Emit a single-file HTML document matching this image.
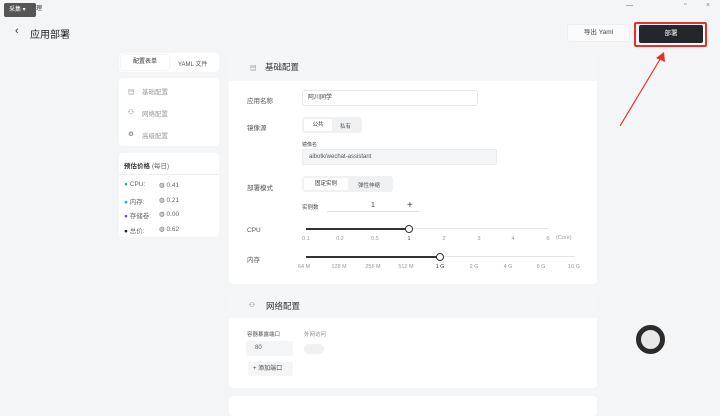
<!DOCTYPE html>
<html><head><meta charset="utf-8"><style>
*{box-sizing:border-box;margin:0;padding:0}
body{width:720px;height:409px;overflow:hidden;background:#f4f5f7;font-family:"Liberation Sans","Noto Sans CJK SC",sans-serif;color:#333;position:relative;font-size:7px}
.a{position:absolute}
.card{background:#fff;border-radius:4px}
.t{color:#666;font-size:6.5px}
.lbl{color:#555;font-size:6.5px}
.inp{background:#fff;border:1px solid #e6e6e6;border-radius:3px}
.tick{position:absolute;font-size:5.5px;color:#999;transform:translateX(-50%)}
</style></head><body>
<div class="a" style="left:4px;top:3px;width:32px;height:14px;background:#555;border-radius:2px;color:#fff;font-size:6px;line-height:14px;padding-left:5px">采集 ▾</div>
<div class="a" style="left:36px;top:3px;font-size:6px;color:#333">理</div>
<div class="a" style="left:626px;top:2px;font-size:7px;color:#666">—</div>
<div class="a" style="left:684px;top:1px;font-size:7px;color:#666">▫</div>
<div class="a" style="left:706px;top:2px;font-size:7px;color:#888">×</div>
<div class="a" style="left:15px;top:25px;font-size:11px;color:#333">‹</div>
<div class="a" style="left:30px;top:26px;font-size:10px;color:#222">应用部署</div>
<div class="a" style="left:567px;top:24px;width:63px;height:18px;background:#fafafa;border:1px solid #eee;border-radius:3px;font-size:6.5px;line-height:16px;text-align:center;color:#444">导出 Yaml</div>
<div class="a" style="left:634px;top:22px;width:73px;height:25px;border:2px solid #e8302a;border-radius:2px"></div>
<div class="a" style="left:639px;top:25px;width:64px;height:18px;background:#23262b;border-radius:2px;color:#fff;font-size:6.5px;line-height:18px;text-align:center">部署</div>
<svg class="a" style="left:610px;top:44px" width="60" height="90"><line x1="10" y1="82" x2="52" y2="12" stroke="#e8302a" stroke-width="1.2"/><polygon points="54,8 46,14 55,18" fill="#e8302a"/></svg>

<div class="a card" style="left:119px;top:53px;width:100px;height:19px"></div>
<div class="a" style="left:121px;top:55px;width:48px;height:15px;background:#fff;box-shadow:0 0 2px #ddd;border-radius:3px;font-size:6px;line-height:15px;text-align:center">配置表单</div>
<div class="a" style="left:178px;top:59px;font-size:6px;color:#555">YAML 文件</div>
<div class="a card" style="left:119px;top:78px;width:100px;height:68px"></div>
<div class="a t" style="left:128px;top:86px">▤</div><div class="a t" style="left:142px;top:86px;color:#999">基础配置</div>
<div class="a t" style="left:128px;top:108px">⚇</div><div class="a t" style="left:142px;top:108px;color:#999">网络配置</div>
<div class="a t" style="left:128px;top:130px">⚙</div><div class="a t" style="left:142px;top:130px;color:#999">高级配置</div>
<div class="a card" style="left:119px;top:153px;width:100px;height:84px"></div>
<div class="a" style="left:124px;top:160px;font-size:6.5px;color:#333"><b>预估价格</b> <span style="color:#666">(每日)</span></div>
<div class="a" style="left:119px;top:174px;width:100px;height:1px;background:#eee"></div>
<div class="a t" style="left:124px;top:181px"><span style="color:#2bb38d">●</span> CPU:</div><div class="a t" style="left:159px;top:181px">◍ 0.41</div>
<div class="a t" style="left:124px;top:196px"><span style="color:#2a9fe0">●</span> 内存:</div><div class="a t" style="left:159px;top:196px">◍ 0.21</div>
<div class="a t" style="left:124px;top:210px"><span style="color:#6c4fc9">●</span> 存储卷:</div><div class="a t" style="left:159px;top:210px">◍ 0.00</div>
<div class="a t" style="left:124px;top:225px"><span style="color:#222">●</span> 总价:</div><div class="a t" style="left:159px;top:225px">◍ 0.62</div>

<div class="a card" style="left:229px;top:54px;width:368px;height:230px"></div>
<div class="a" style="left:229px;top:54px;width:368px;height:27px;background:#f5f6f8;border-radius:4px 4px 0 0"></div>
<div class="a t" style="left:250px;top:62px">▤</div>
<div class="a" style="left:265px;top:61px;font-size:8.5px;color:#333">基础配置</div>
<div class="a lbl" style="left:247px;top:95px">应用名称</div>
<div class="a inp" style="left:302px;top:90px;width:176px;height:16px;padding-left:5px;font-size:6px;line-height:14px">阿川同学</div>
<div class="a lbl" style="left:247px;top:122px">镜像源</div>
<div class="a" style="left:302px;top:117px;width:60px;height:16px;background:#f0f1f3;border-radius:3px"></div>
<div class="a" style="left:304px;top:119px;width:28px;height:12px;background:#fff;border-radius:2px;font-size:5.5px;line-height:12px;text-align:center">公共</div>
<div class="a" style="left:340px;top:122px;font-size:5.5px;color:#555">私有</div>
<div class="a" style="left:302px;top:141px;font-size:5px;color:#444">镜像名</div>
<div class="a" style="left:302px;top:149px;width:195px;height:16px;background:#f4f5f7;border:1px solid #ececec;border-radius:2px;padding-left:6px;font-size:6px;line-height:14px;color:#555">aibotk/wechat-assistant</div>
<div class="a lbl" style="left:247px;top:182px">部署模式</div>
<div class="a" style="left:302px;top:176px;width:91px;height:16px;background:#f0f1f3;border-radius:3px"></div>
<div class="a" style="left:304px;top:178px;width:44px;height:12px;background:#fff;border-radius:2px;font-size:5.5px;line-height:12px;text-align:center">固定实例</div>
<div class="a" style="left:358px;top:181px;font-size:5.5px;color:#555">弹性伸缩</div>
<div class="a" style="left:302px;top:203px;font-size:5.5px;color:#444">实例数</div>
<div class="a" style="left:327px;top:211px;width:92px;height:1px;background:#ddd"></div>
<div class="a" style="left:371px;top:202px;font-size:7px">1</div>
<div class="a" style="left:407px;top:200px;font-size:10px;color:#444">+</div>
<div class="a lbl" style="left:247px;top:227px">CPU</div>
<div class="a" style="left:306px;top:228px;width:242px;height:1px;background:#e4e4e4"></div>
<div class="a" style="left:306px;top:228px;width:103px;height:2px;background:#333"></div>
<div class="a" style="left:405px;top:225px;width:8px;height:8px;border:1.5px solid #333;border-radius:50%;background:#fff"></div>
<div class="tick" style="left:306px;top:236px">0.1</div><div class="tick" style="left:340px;top:236px">0.2</div><div class="tick" style="left:375px;top:236px">0.5</div><div class="tick" style="left:409px;top:236px;color:#333">1</div><div class="tick" style="left:444px;top:236px">2</div><div class="tick" style="left:479px;top:236px">3</div><div class="tick" style="left:513px;top:236px">4</div><div class="tick" style="left:548px;top:236px">6</div>
<div class="a" style="left:556px;top:235px;font-size:5.5px;color:#999">(Core)</div>
<div class="a lbl" style="left:247px;top:254px">内存</div>
<div class="a" style="left:306px;top:256px;width:269px;height:1px;background:#e4e4e4"></div>
<div class="a" style="left:306px;top:256px;width:134px;height:2px;background:#333"></div>
<div class="a" style="left:436px;top:253px;width:8px;height:8px;border:1.5px solid #333;border-radius:50%;background:#fff"></div>
<div class="tick" style="left:304px;top:264px">64 M</div><div class="tick" style="left:339px;top:264px">128 M</div><div class="tick" style="left:373px;top:264px">256 M</div><div class="tick" style="left:406px;top:264px">512 M</div><div class="tick" style="left:440px;top:264px;color:#333">1 G</div><div class="tick" style="left:474px;top:264px">2 G</div><div class="tick" style="left:508px;top:264px">4 G</div><div class="tick" style="left:541px;top:264px">8 G</div><div class="tick" style="left:574px;top:264px">16 G</div>

<div class="a card" style="left:229px;top:294px;width:368px;height:94px"></div>
<div class="a" style="left:229px;top:294px;width:368px;height:24px;background:#f5f6f8;border-radius:4px 4px 0 0"></div>
<div class="a t" style="left:249px;top:301px">⚇</div>
<div class="a" style="left:266px;top:300px;font-size:8.5px;color:#333">网络配置</div>
<div class="a" style="left:247px;top:330px;font-size:5.5px;color:#555">容器暴露端口</div>
<div class="a" style="left:304px;top:330px;font-size:5.5px;color:#888">外网访问</div>
<div class="a" style="left:246px;top:341px;width:47px;height:15px;background:#f4f5f7;border-radius:2px;padding-left:9px;font-size:6px;line-height:15px;color:#555">80</div>
<div class="a" style="left:304px;top:344px;width:20px;height:10px;background:#f0f0f0;border-radius:5px"></div>
<div class="a" style="left:248px;top:362px;width:45px;height:14px;background:#f4f5f7;border-radius:2px;font-size:6px;line-height:14px;padding-left:5px;color:#444">+ 添加端口</div>
<div class="a card" style="left:229px;top:396px;width:368px;height:20px"></div>
<div class="a" style="left:636px;top:325px;width:29px;height:29px;border-radius:50%;border:5px solid #2b2b2b;background:#e8e8e8"></div>
</body></html>
